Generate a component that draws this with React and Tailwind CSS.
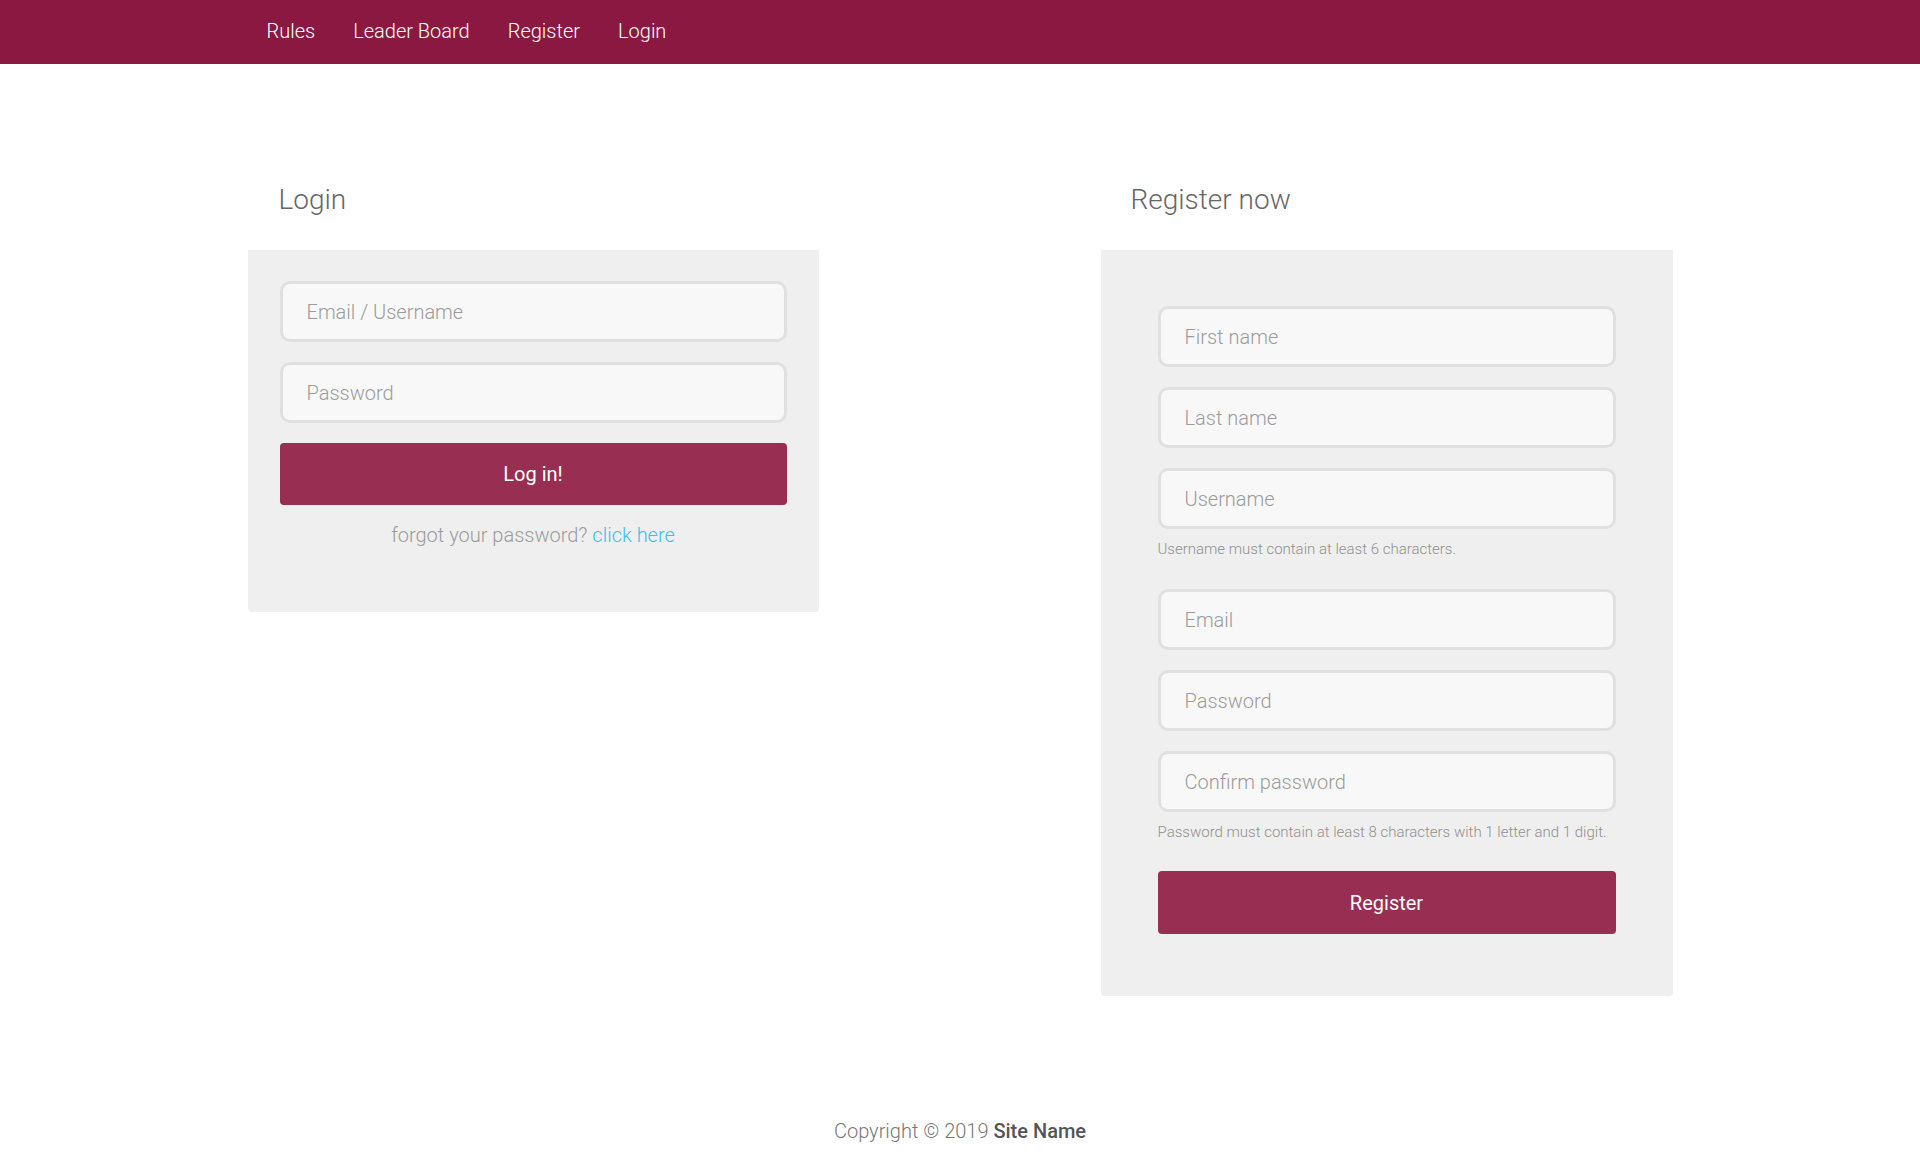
import { useState } from "react";

function Field({ type = "text", placeholder }) {
  const [value, setValue] = useState("");

  return (
    <input
      type={type}
      value={value}
      onChange={(e) => setValue(e.target.value)}
      placeholder={placeholder}
      className="block w-full h-[61px] bg-[#f8f8f8] border-[3px] border-[#e0e0e0] rounded-[10px] px-6 text-[20px] font-light text-[#555] placeholder:text-[#9b9b9b] outline-none"
    />
  );
}

function App() {
  const links = ["Rules", "Leader Board", "Register", "Login"];

  return (
    <div className="min-h-screen bg-white font-['Roboto',sans-serif]">
      <nav className="h-16 bg-[#8b1840]">
        <div className="w-[1425px] mx-auto h-full flex items-center">
          {links.map((link) => (
            <a
              key={link}
              href="#"
              className="px-[19px] text-[20px] font-light text-white leading-6 pb-[2px]"
            >
              {link}
            </a>
          ))}
        </div>
      </nav>

      <main className="w-[1425px] mx-auto pt-[119px] flex justify-between items-start">
        <section className="w-[571px]">
          <h2 className="pl-[31px] text-[28px] leading-[34px] font-light text-[#666]">
            Login
          </h2>

          <div className="mt-[33px] bg-[#efefef] rounded-b-[4px] pt-[31px] px-[32px] pb-[65px]">
            <form onSubmit={(e) => e.preventDefault()}>
              <div className="flex flex-col gap-5">
                <Field placeholder="Email / Username" />
                <Field type="password" placeholder="Password" />
              </div>

              <button
                type="submit"
                className="mt-5 w-full h-[62px] rounded-[4px] bg-[#982e52] text-white text-[20px]"
              >
                Log in!
              </button>
            </form>

            <p className="mt-[18px] text-center text-[20px] leading-6 font-light text-[#9b9b9b]">
              forgot your password?{" "}
              <a href="#" className="text-[#3bbfe6]">
                click here
              </a>
            </p>
          </div>
        </section>

        <section className="w-[572px]">
          <h2 className="pl-[30px] text-[28px] leading-[34px] font-light text-[#666]">
            Register now
          </h2>

          <div className="mt-[33px] bg-[#efefef] rounded-b-[4px] pt-[56px] px-[57px] pb-[62px]">
            <form onSubmit={(e) => e.preventDefault()}>
              <div className="flex flex-col gap-5">
                <Field placeholder="First name" />
                <Field placeholder="Last name" />
                <Field placeholder="Username" />
              </div>

              <p className="mt-[10px] text-[15px] leading-5 font-light text-[#8f8f8f]">
                Username must contain at least 6 characters.
              </p>

              <div className="mt-[30px] flex flex-col gap-5">
                <Field type="email" placeholder="Email" />
                <Field type="password" placeholder="Password" />
                <Field type="password" placeholder="Confirm password" />
              </div>

              <p className="mt-[10px] text-[15px] leading-5 font-light text-[#8f8f8f]">
                Password must contain at least 8 characters with 1 letter and 1 digit.
              </p>

              <button
                type="submit"
                className="mt-[29px] w-full h-[63px] rounded-[4px] bg-[#982e52] text-white text-[20px]"
              >
                Register
              </button>
            </form>
          </div>
        </section>
      </main>

      <footer className="pt-[123px] pb-[22px] text-center text-[20px] leading-6 font-light text-[#777]">
        Copyright © 2019 <span className="font-medium text-[#555]">Site Name</span>
      </footer>
    </div>
  );
}

export default App;
